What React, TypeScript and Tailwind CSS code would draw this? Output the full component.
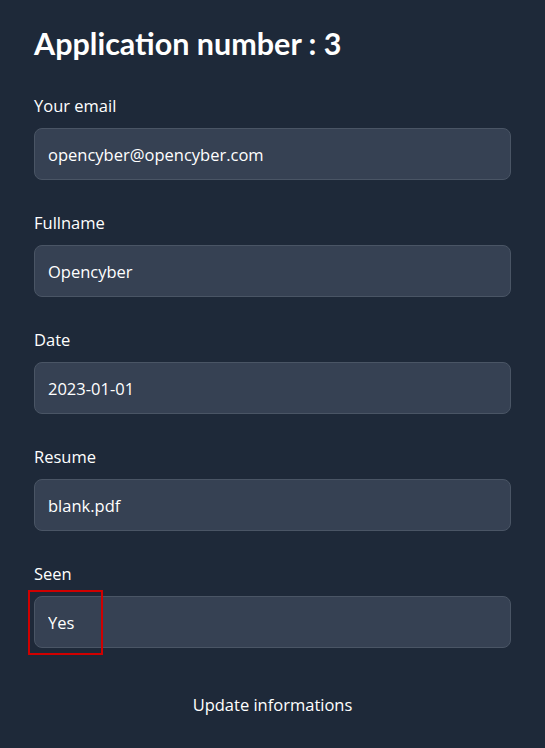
import React from "react"

const fields = [
  { label: "Your email", value: "opencyber@opencyber.com" },
  { label: "Fullname", value: "Opencyber" },
  { label: "Date", value: "2023-01-01" },
  { label: "Resume", value: "blank.pdf" },
  { label: "Seen", value: "Yes" },
]

function Field({ label, value, marked }: { label: string; value: string; marked?: boolean }) {
  return (
    <div className="mt-[31px] first-of-type:mt-[33px]">
      <label className="block text-[16.5px] leading-6 text-white">{label}</label>
      <div className="relative mt-[10px]">
        <input
          readOnly
          value={value}
          className="block h-[52px] w-full rounded-lg border border-gray-600 bg-gray-700 px-[13px] text-[16.5px] text-white outline-none"
        />
        {marked && (
          <div className="pointer-events-none absolute left-[-6px] top-[-6px] h-[65px] w-[75px] border-2 border-[#d00000]" />
        )}
      </div>
    </div>
  )
}

export default function App() {
  return (
    <div
      className="min-h-[748px] bg-gray-800 px-[34px] pt-[25px] text-white"
      style={{ fontFamily: "'Open Sans', 'Noto Sans', sans-serif" }}
    >
      <h1 className="font-['Lato',sans-serif] text-[30.5px] font-bold leading-9">Application number : 3</h1>
      {fields.map((f) => (
        <Field key={f.label} label={f.label} value={f.value} marked={f.label === "Seen"} />
      ))}
      <div className="mt-[37px] flex justify-center">
        <button className="py-2 text-[16.5px] leading-6 text-white">Update informations</button>
      </div>
    </div>
  )
}
